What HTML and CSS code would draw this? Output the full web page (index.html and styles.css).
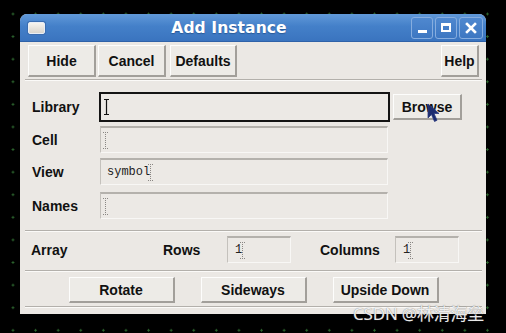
FILE: index.html
```html
<!DOCTYPE html>
<html>
<head>
<meta charset="utf-8">
<link rel="stylesheet" href="styles.css">
</head>
<body>
<div class="window">
  <div class="titlebar">
    <span class="wicon"></span>
    <span class="title">Add Instance</span>
    <div class="tbtns">
      <span class="tb"><span class="g-min"></span></span>
      <span class="tb"><span class="g-max"></span></span>
      <span class="tb tb-close"><svg width="12" height="12" viewBox="0 0 12 12"><path d="M2 2L10 10M10 2L2 10" stroke="#fff" stroke-width="2.6" stroke-linecap="square"/></svg></span>
    </div>
  </div>

  <div class="toolbar">
    <div class="btn b-hide">Hide</div>
    <div class="btn b-cancel">Cancel</div>
    <div class="btn b-defaults">Defaults</div>
    <div class="btn b-help">Help</div>
  </div>
  <div class="sep s1"></div>

  <div class="row r-lib">
    <span class="lbl">Library</span>
    <div class="field focus"><svg class="ibeam" width="5" height="16" viewBox="0 0 5 16"><path d="M0 .5H5M2.5 0V16M0 15.5H5" stroke="#111" stroke-width="1.2"/></svg></div>
    <div class="btn b-browse">Browse</div>
  </div>
  <div class="row r-cell">
    <span class="lbl">Cell</span>
    <div class="field"><svg class="dbeam" width="5" height="17" viewBox="0 0 5 17"><path d="M0 .5H5M2.5 0V17M0 16.5H5" stroke="#8a8784" stroke-width="1" stroke-dasharray="1 1"/></svg></div>
  </div>
  <div class="row r-view">
    <span class="lbl">View</span>
    <div class="field"><span class="val">symbol</span><svg class="dbeam after" width="5" height="17" viewBox="0 0 5 17"><path d="M0 .5H5M2.5 0V17M0 16.5H5" stroke="#8a8784" stroke-width="1" stroke-dasharray="1 1"/></svg></div>
  </div>
  <div class="row r-names">
    <span class="lbl">Names</span>
    <div class="field"><svg class="dbeam" width="5" height="17" viewBox="0 0 5 17"><path d="M0 .5H5M2.5 0V17M0 16.5H5" stroke="#8a8784" stroke-width="1" stroke-dasharray="1 1"/></svg></div>
  </div>
  <div class="sep s2"></div>

  <div class="array">
    <span class="lbl l-array">Array</span>
    <span class="lbl l-rows">Rows</span>
    <div class="field small"><span class="val">1</span><svg class="dbeam after" width="5" height="17" viewBox="0 0 5 17"><path d="M0 .5H5M2.5 0V17M0 16.5H5" stroke="#8a8784" stroke-width="1" stroke-dasharray="1 1"/></svg></div>
    <span class="lbl l-cols">Columns</span>
    <div class="field small"><span class="val">1</span><svg class="dbeam after" width="5" height="17" viewBox="0 0 5 17"><path d="M0 .5H5M2.5 0V17M0 16.5H5" stroke="#8a8784" stroke-width="1" stroke-dasharray="1 1"/></svg></div>
  </div>
  <div class="sep s3"></div>

  <div class="actions">
    <div class="btn b-act">Rotate</div>
    <div class="btn b-act">Sideways</div>
    <div class="btn b-act">Upside Down</div>
  </div>
  <div class="sep s4"></div>
</div>

<svg class="cursor" width="13" height="20" viewBox="0 0 13 20"><path d="M1 1L1 15L4.5 11.5L7.5 18.5L10 17.3L7 10.5L12 10.5Z" fill="#1d2c6e" stroke="#2a3a80" stroke-width="0.8" stroke-linejoin="round"/></svg>

<div class="watermark">CSDN @林清海垒</div>
</body>
</html>
```

FILE: styles.css
```css
html, body {
  margin: 0;
  padding: 0;
}
body {
  width: 506px;
  height: 333px;
  overflow: hidden;
  background-color: #000;
  background-image: radial-gradient(circle, #2e6a30 0.9px, rgba(0,0,0,0) 1.4px);
  background-size: 22.6px 22.6px;
  background-position: 1.7px 2.7px;
  position: relative;
  font-family: "Liberation Sans", Arial, sans-serif;
}
.window {
  position: absolute;
  left: 20px;
  top: 14px;
  width: 466px;
  height: 300px;
  background: #ebe8e4;
  border-radius: 7px 7px 0 0;
  display: flex;
  flex-direction: column;
}
.titlebar {
  height: 28px;
  flex: none;
  border-radius: 7px 7px 0 0;
  background: linear-gradient(#6199d9, #4480c9 45%, #3a74bf);
  border-bottom: 1px solid #2f62a8;
  box-sizing: border-box;
  display: flex;
  align-items: center;
  padding: 0 3px 0 8px;
}
.wicon {
  width: 15px;
  height: 10px;
  border: 1px solid #e8eef6;
  border-radius: 2px;
  background: linear-gradient(#f7f4ee, #d9d5cd);
  box-shadow: 0 0 0 1px #3b6db0;
  flex: none;
}
.title {
  flex: 1;
  text-align: center;
  color: #fff;
  font-family: "DejaVu Sans", sans-serif;
  font-weight: bold;
  font-size: 15.5px;
  letter-spacing: 0.1px;
  text-shadow: 0 1px 1px #2a5a98;
  padding-left: 2px;
}
.tbtns {
  display: flex;
  gap: 2px;
  flex: none;
}
.tb {
  width: 22px;
  height: 22px;
  box-sizing: border-box;
  border: 1px solid #86addf;
  border-radius: 3px;
  background: linear-gradient(#4f88cf, #3d77c2);
  display: flex;
  align-items: center;
  justify-content: center;
  position: relative;
}
.tb-close { width: 24px; }
.g-min {
  position: absolute;
  left: 6px;
  bottom: 5px;
  width: 9px;
  height: 3px;
  background: #fff;
}
.g-max {
  width: 10px;
  height: 9px;
  box-sizing: border-box;
  border: 2px solid #fff;
  border-top-width: 3px;
}

/* buttons */
.btn {
  box-sizing: border-box;
  background: #edebe7;
  border-top: 1px solid #fdfdfc;
  border-left: 1px solid #fdfdfc;
  border-right: 2px solid #a29f9a;
  border-bottom: 2px solid #a29f9a;
  display: flex;
  align-items: center;
  justify-content: center;
  font-weight: bold;
  font-size: 14px;
  color: #111;
}
.toolbar {
  display: flex;
  margin-top: 3px;
  padding-left: 8px;
  height: 32px;
  flex: none;
}
.b-hide { width: 68px; }
.b-cancel { width: 68px; margin-left: 2px; }
.b-defaults { width: 67px; margin-left: 4px; }
.b-help { width: 38px; margin-left: auto; margin-right: 7px; }

.sep {
  height: 1px;
  border-top: 1px solid #b3b0ab;
  border-bottom: 1px solid #fbfaf8;
  height: 0;
  margin: 0 4px 0 5px;
  flex: none;
}
.s1 { margin-top: 2px; }
.s2 { margin-top: 11px; }
.s3 { margin-top: 7px; }
.s4 { margin-top: 3px; }

/* form rows */
.row {
  display: flex;
  align-items: center;
  padding-left: 12px;
  flex: none;
}
.lbl {
  font-weight: bold;
  font-size: 14px;
  color: #111;
}
.row .lbl { width: 68px; }
.r-lib { margin-top: 11px; height: 30px; }
.r-cell { margin-top: 4px; height: 27px; }
.r-view { margin-top: 5px; height: 27px; }
.r-names { margin-top: 7px; height: 27px; }
.row .lbl { width: 68px; }
.r-lib .lbl { width: 67px; }

.field {
  box-sizing: border-box;
  width: 288px;
  height: 27px;
  background: #ece9e5;
  border-top: 2px solid #b4b1ac;
  border-left: 1px solid #c4c1bc;
  border-right: 1px solid #f8f7f5;
  border-bottom: 1px solid #f8f7f5;
  display: flex;
  align-items: center;
  padding-left: 2px;
  position: relative;
}
.field.focus {
  width: 291px;
  height: 30px;
  border: 2px solid #141414;
  padding-left: 3px;
}
.b-browse {
  width: 69px;
  height: 26px;
  margin-left: 3px;
}
.ibeam { display: block; }
.dbeam { display: block; }
.val {
  font-family: "Liberation Mono", "Courier New", monospace;
  font-size: 12px;
  color: #222;
  padding-left: 4px;
}
.dbeam.after { margin-left: -2px; }

/* array row */
.array {
  display: flex;
  align-items: center;
  height: 27px;
  margin-top: 4px;
  padding-left: 11px;
  flex: none;
}
.l-array { width: 132px; }
.l-rows { width: 64px; }
.l-cols { width: 75px; margin-left: 29px; }
.field.small { width: 64px; }
.field.small .val { padding-left: 5px; }

/* actions */
.actions {
  display: flex;
  justify-content: center;
  gap: 26px;
  margin-top: 5px;
  height: 26px;
  flex: none;
  padding-left: 1px;
}
.b-act { width: 106px; }

.cursor {
  position: absolute;
  left: 427px;
  top: 103px;
}
.watermark {
  position: absolute;
  left: 353px;
  top: 300px;
  font-family: "Noto Sans", "Noto Sans CJK SC", sans-serif;
  font-size: 17px;
  color: rgba(250,250,250,0.92);
  text-shadow: 0 0 1px rgba(90,90,90,0.9);
  white-space: nowrap;
  letter-spacing: -0.2px;
}
```
